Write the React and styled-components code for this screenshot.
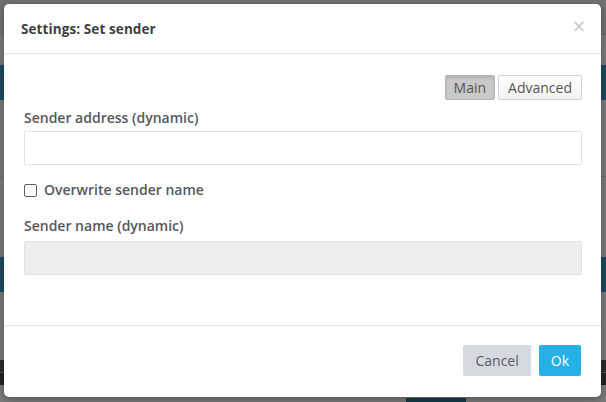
import React from 'react'
import styled, { createGlobalStyle } from 'styled-components'

const GlobalStyle = createGlobalStyle`
  html, body {
    margin: 0;
    padding: 0;
    height: 100%;
  }
  body {
    font-family: 'Open Sans', 'Noto Sans', sans-serif;
    background: #7a7a7a;
    overflow: hidden;
  }
  #root {
    height: 100%;
  }
`

const Backdrop = styled.div`
  position: relative;
  width: 606px;
  height: 402px;
  background: #7b7b7b;
  display: flex;
  flex-direction: column;
`

const Band = styled.div`
  height: ${(p) => p.$h}px;
  background: ${(p) => p.$bg || 'transparent'};
  border-bottom: ${(p) => (p.$line ? '1px solid #6e6e6e' : 'none')};
  flex-shrink: 0;
`

const BottomTab = styled.div`
  margin-left: 406px;
  width: 60px;
  height: 6px;
  background: #153c4b;
`

const Modal = styled.div`
  position: absolute;
  left: 4px;
  top: 4px;
  width: 597px;
  height: 393px;
  background: #fff;
  border-radius: 5px;
  box-shadow: 0 2px 8px rgba(0, 0, 0, 0.35);
  display: flex;
  flex-direction: column;
  color: #4d4f53;
`

const Header = styled.div`
  height: 50px;
  box-sizing: border-box;
  border-bottom: 1px solid #e4e4e4;
  display: flex;
  align-items: center;
  justify-content: space-between;
  padding: 0 15px 0 17px;
`

const Title = styled.h4`
  margin: 0;
  font-size: 13.5px;
  font-weight: 700;
  color: #3d3f44;
  letter-spacing: 0.1px;
`

const Close = styled.span`
  font-family: 'DejaVu Sans', sans-serif;
  font-size: 17px;
  color: #c8c8c8;
  line-height: 1;
  margin-top: -4px;
`

const Body = styled.div`
  flex: 1;
  padding: 21px 19px 0 20px;
  display: flex;
  flex-direction: column;
`

const TabGroup = styled.div`
  display: flex;
  justify-content: flex-end;
  gap: 3px;
  margin-bottom: 8px;
`

const TabButton = styled.button`
  height: 25px;
  box-sizing: border-box;
  padding: 0 ${(p) => (p.$active ? 8 : 9)}px;
  font-family: 'Open Sans', sans-serif;
  font-size: 14px;
  color: #555;
  border-radius: 2px;
  border: 1px solid ${(p) => (p.$active ? '#b5b5b5' : '#d2d2d2')};
  background: ${(p) =>
    p.$active ? '#c9c9c9' : 'linear-gradient(#ffffff, #f1f1f1)'};
  box-shadow: ${(p) =>
    p.$active ? 'inset 0 2px 3px rgba(0,0,0,0.12)' : 'none'};
`

const Label = styled.label`
  display: block;
  font-size: 14px;
  font-weight: 600;
  line-height: 20px;
  color: #55575c;
  margin-bottom: ${(p) => p.$mb || 3}px;
`

const Input = styled.input`
  display: block;
  width: 100%;
  height: 34px;
  box-sizing: border-box;
  border: 1px solid #e2e2e2;
  border-radius: 2px;
  background: ${(p) => (p.disabled ? '#eeeeee' : '#fff')};
  outline: none;
`

const CheckRow = styled.label`
  display: flex;
  align-items: center;
  gap: 7px;
  margin: 15px 0 16px;
  font-size: 14px;
  font-weight: 600;
  line-height: 20px;
  color: #55575c;
`

const Check = styled.input`
  appearance: none;
  margin: 0;
  width: 13px;
  height: 13px;
  border: 1px solid #5c5e62;
  border-radius: 2px;
  background: #fff;
`

const Footer = styled.div`
  border-top: 1px solid #e4e4e4;
  height: 72px;
  box-sizing: border-box;
  display: flex;
  justify-content: flex-end;
  align-items: flex-start;
  gap: 8px;
  padding: 19px 20px 0 0;
`

const FooterButton = styled.button`
  height: 31px;
  padding: 0 12px;
  border: none;
  border-radius: 2px;
  font-family: 'Open Sans', sans-serif;
  font-size: 14px;
  background: ${(p) => (p.$primary ? '#25b1e6' : '#d5d9e0')};
  color: ${(p) => (p.$primary ? '#fff' : '#5a5d63')};
`

export default function App() {
  return (
    <>
      <GlobalStyle />
      <Backdrop>
        <Band $h={34} $bg="#727272" $line />
        <Band $h={30} />
        <Band $h={35} $bg="#1c4c60" />
        <Band $h={76} $line />
        <Band $h={80} />
        <Band $h={35} $bg="#1c4c60" />
        <Band $h={68} />
        <Band $h={12} $bg="#2a2c2e" />
        <Band $h={1} $bg="#505050" />
        <Band $h={12} $bg="#222426" />
        <Band $h={13} />
        <BottomTab />
        <Modal>
          <Header>
            <Title>Settings: Set sender</Title>
            <Close>×</Close>
          </Header>
          <Body>
            <TabGroup>
              <TabButton $active>Main</TabButton>
              <TabButton>Advanced</TabButton>
            </TabGroup>
            <Label>Sender address (dynamic)</Label>
            <Input type="text" />
            <CheckRow>
              <Check type="checkbox" />
              Overwrite sender name
            </CheckRow>
            <Label $mb={5}>Sender name (dynamic)</Label>
            <Input type="text" disabled />
          </Body>
          <Footer>
            <FooterButton>Cancel</FooterButton>
            <FooterButton $primary>Ok</FooterButton>
          </Footer>
        </Modal>
      </Backdrop>
    </>
  )
}
